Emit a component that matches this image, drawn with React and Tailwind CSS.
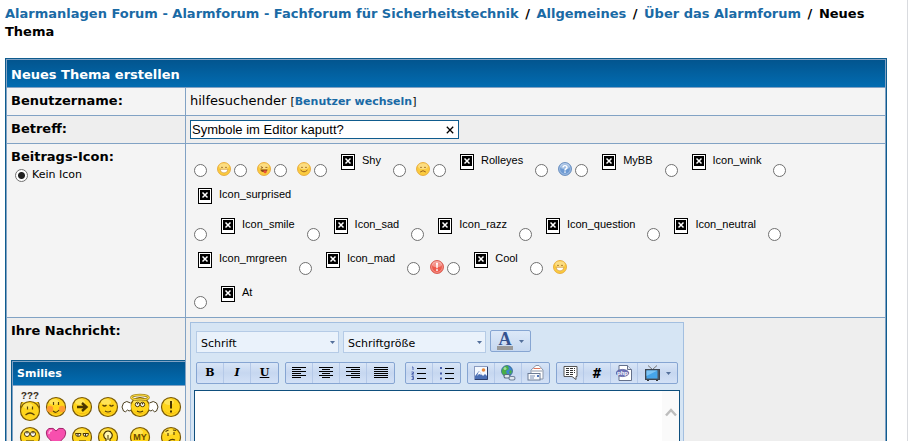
import React from 'react'

const postIconRows = [
  [
    { type: 'radio', id: 'grin' },
    { type: 'face', mood: 'grin' },
    { type: 'radio', id: 'tongue' },
    { type: 'face', mood: 'tongue' },
    { type: 'radio', id: 'smile' },
    { type: 'face', mood: 'smile' },
    { type: 'radio', id: 'shy' },
    { type: 'missing', text: 'Shy' },
    { type: 'radio', id: 'sad' },
    { type: 'face', mood: 'sad' },
    { type: 'radio', id: 'rolleyes' },
    { type: 'missing', text: 'Rolleyes' },
    { type: 'radio', id: 'question' },
    { type: 'face', mood: 'question' },
    { type: 'radio', id: 'mybb' },
    { type: 'missing', text: 'MyBB' },
    { type: 'radio', id: 'icon_wink' },
    { type: 'missing', text: 'Icon_wink' },
    { type: 'radio', id: 'icon_surprised' },
  ],
  [{ type: 'missing', text: 'Icon_surprised' }],
  [
    { type: 'radio', id: 'icon_smile' },
    { type: 'missing', text: 'Icon_smile' },
    { type: 'radio', id: 'icon_sad' },
    { type: 'missing', text: 'Icon_sad' },
    { type: 'radio', id: 'icon_razz' },
    { type: 'missing', text: 'Icon_razz' },
    { type: 'radio', id: 'icon_question' },
    { type: 'missing', text: 'Icon_question' },
    { type: 'radio', id: 'icon_neutral' },
    { type: 'missing', text: 'Icon_neutral' },
    { type: 'radio', id: 'icon_mrgreen' },
  ],
  [
    { type: 'missing', text: 'Icon_mrgreen' },
    { type: 'radio', id: 'icon_mad' },
    { type: 'missing', text: 'Icon_mad' },
    { type: 'radio', id: 'exclamation' },
    { type: 'face', mood: 'exclamation' },
    { type: 'radio', id: 'cool' },
    { type: 'missing', text: 'Cool' },
    { type: 'radio', id: 'biggrin' },
    { type: 'face', mood: 'grin' },
  ],
  [
    { type: 'radio', id: 'at' },
    { type: 'missing', text: 'At' },
  ],
]

const Radio = ({ id, label, defaultChecked }) => (
  <input
    type="radio"
    name="icon"
    id={`icon-${id}`}
    aria-label={label}
    defaultChecked={defaultChecked}
    className="block size-[13px] shrink-0 appearance-none rounded-full border border-[#707070] bg-white checked:bg-[radial-gradient(circle,#222_0,#222_3px,#fff_4px)]"
  />
)

const PostFace = ({ mood }) => {
  const special = mood === 'question' || mood === 'exclamation'
  const fill = mood === 'question' ? '#6d9ad3' : mood === 'exclamation' ? '#ee5a4c' : '#fbcb3f'
  const edge = mood === 'question' ? '#5d84b8' : mood === 'exclamation' ? '#d34b40' : '#e3a22c'
  return (
    <svg viewBox="0 0 14 14" className="size-3.5" aria-hidden="true">
      <circle cx="7" cy="7" r="6.5" fill={fill} stroke={edge} strokeWidth=".8" />
      <ellipse cx="7" cy="4.2" rx="4.8" ry="3" fill="#fff" opacity=".35" />
      {special && <circle cx="7" cy="7" r="5.4" fill="none" stroke="#fff" strokeWidth=".7" opacity=".5" />}
      {!special && mood !== 'tongue' && (
        <path d="M4.2 5.6q.8-1.2 1.6 0M8.2 5.6q.8-1.2 1.6 0" fill="none" stroke="#8f5a18" strokeWidth=".9" />
      )}
      {mood === 'grin' && <path d="M3 7.3h8q-.5 3.6-4 3.6t-4-3.6z" fill="#fff" stroke="#c98a2a" strokeWidth=".6" />}
      {mood === 'tongue' && (
        <>
          <path d="M3.8 4.6l2 1-2 .8M8.4 5.4h2" fill="none" stroke="#8f5a18" strokeWidth=".9" />
          <path d="M3.4 7.4h7.2q-.5 2.6-3.6 2.6t-3.6-2.6z" fill="#8a4a1a" />
          <path d="M6.6 8.4h3v2.2q-1.5 1.6-3 0z" fill="#e8503a" />
        </>
      )}
      {mood === 'smile' && <path d="M3.5 8q3.5 3.6 7 0" fill="none" stroke="#9a611c" strokeWidth="1" />}
      {mood === 'sad' && <path d="M4.2 10q2.8-2.6 5.6 0" fill="none" stroke="#9a611c" strokeWidth="1" />}
      {mood === 'question' && (
        <>
          <path d="M5 5.6q0-2 2-2t2 1.8q0 1-1.2 1.6-.8.4-.8 1.4" fill="none" stroke="#fff" strokeWidth="1.4" />
          <rect x="6.3" y="9.4" width="1.4" height="1.4" fill="#fff" />
        </>
      )}
      {mood === 'exclamation' && (
        <>
          <path d="M6 2.8h2l-.4 5.4H6.4z" fill="#fff" />
          <rect x="6.2" y="9.2" width="1.6" height="1.7" fill="#fff" />
        </>
      )}
    </svg>
  )
}

const MissingIcon = ({ text }) => (
  <span className="ml-1 mr-3 flex items-start gap-[7px] font-['Liberation_Sans',sans-serif] text-[11px] leading-3">
    <svg viewBox="0 0 14 16" className="h-4 w-3.5" aria-hidden="true">
      <rect x=".5" y=".5" width="13" height="15" fill="#fff" stroke="#000" />
      <rect x="2" y="2" width="10" height="10" fill="#000" />
      <path d="M4.5 4.5l5 5M9.5 4.5l-5 5" stroke="#fff" strokeWidth="1.5" />
    </svg>
    {text}
  </span>
)

const PostIcon = ({ item }) => {
  if (item.type === 'radio') {
    return (
      <span className="mr-2.5 pt-2.5">
        <Radio id={item.id} label={item.id} />
      </span>
    )
  }
  if (item.type === 'face') {
    return (
      <span className="mr-[3px] pt-2">
        <PostFace mood={item.mood} />
      </span>
    )
  }
  return <MissingIcon text={item.text} />
}

const Ball = ({ children, label }) => (
  <button type="button" aria-label={label} className="block shrink-0">
    <svg viewBox="0 0 22 22" className="size-[22px] overflow-visible">
      <circle cx="11" cy="11" r="9.5" fill="#ffd51c" stroke="#7a5a08" strokeWidth="1.2" />
      <path d="M4 14a8 8 0 0 0 14 0a9 9 0 0 1-14 0" fill="#f2b30c" />
      <ellipse cx="9" cy="6" rx="5" ry="3" fill="#ffea70" opacity=".7" />
      {children}
    </svg>
  </button>
)

const Smilies = () => (
  <div className="w-60 border border-[#0f5c8e] bg-[#81a2c4] p-px">
    <div className="bg-linear-to-b from-[#02558f] to-[#026cb1] px-1 py-1 text-[11px] leading-[15px] font-bold text-white">
      Smilies
    </div>
    <div className="mt-px grid grid-cols-[26px_26px_26px_26px_37px_26px] gap-y-2 bg-[#f4f4f4] pt-2.5 pb-2 pl-1 *:justify-self-center">
      <Ball label="confused">
        <rect x="0" y="-6" width="22" height="12" fill="#f4f4f4" />
        <circle cx="11" cy="15" r="9.5" fill="#ffd51c" stroke="#7a5a08" strokeWidth="1.2" />
        <ellipse cx="9" cy="10" rx="5" ry="3" fill="#ffea70" opacity=".7" />
        <path d="M8.5 10.500v3M13.5 10.500v3M6.5 19q4.5-4 9 0" fill="none" stroke="#5a4308" strokeWidth="1.2" />
        <text x="2" y="3" fontSize="10" fontWeight="bold" fontFamily="Liberation Mono" fill="#3a3020">???</text>
      </Ball>
      <Ball label="blush">
        <circle cx="5" cy="13" r="3.2" fill="#ff9c32" />
        <circle cx="17" cy="13" r="3.2" fill="#ff9c32" />
        <path d="M8.5 6v3M13.5 6v3M8 15q3 3 6-1" fill="none" stroke="#5a4308" strokeWidth="1.2" />
      </Ball>
      <Ball label="arrow">
        <path d="M6 11h9M11 7l4.500 4-4.500 4" fill="none" stroke="#4a3600" strokeWidth="2.4" />
      </Ball>
      <Ball label="sleepy">
        <path d="M5.5 9q2 2 4 0M12.5 9q2 2 4 0M8 15q3 2 6 0" fill="none" stroke="#5a4308" strokeWidth="1.2" />
      </Ball>
      <Ball label="angel">
        <path d="M1.5 7q-4-3-7 0q-3 4 0 8q2 2 4-1q1.500 2 3.500 0M20.500 7q4-3 7 0q3 4 0 8q-2 2-4-1q-1.500 2-3.500 0" fill="#fff" stroke="#4b4020" />
        <ellipse cx="11" cy="1.5" rx="8.500" ry="2.500" fill="none" stroke="#a98a20" strokeWidth="2.600" />
        <ellipse cx="11" cy="1.5" rx="8.500" ry="2.500" fill="none" stroke="#ffdf45" strokeWidth="1.200" />
        <circle cx="8.500" cy="8.500" r="2.200" fill="#fff" stroke="#4a3600" />
        <circle cx="13.500" cy="8.500" r="2.200" fill="#fff" stroke="#4a3600" />
        <path d="M8.500 7v1.500M13.500 7v1.500M8 15q3 2 6 0" fill="none" stroke="#4a3600" strokeWidth="1.200" />
      </Ball>
      <Ball label="exclamation">
        <path d="M11 5v7.500M11 14.500v2" stroke="#4a3600" strokeWidth="2" />
      </Ball>
      <Ball label="rolleyes">
        <circle cx="8" cy="8" r="2.500" fill="#fff" stroke="#4a3600" />
        <circle cx="14" cy="8" r="2.500" fill="#fff" stroke="#4a3600" />
        <path d="M8 6v1.500M14 6v1.500M7 15h8" stroke="#4a3600" strokeWidth="1.200" />
      </Ball>
      <button type="button" aria-label="heart" className="block">
        <svg viewBox="0 0 22 22" className="size-[22px]">
          <path d="M11 20L2.500 11Q-.5 5 4 2.500Q8.500 1 11 5Q13.500 1 18 2.500Q22.500 5 19.500 11Z" fill="#f74fae" stroke="#a3266c" />
          <path d="M4 8q0-3.500 3-3.500" fill="none" stroke="#ffb0dd" strokeWidth="1.500" />
        </svg>
      </button>
      <Ball label="dodgy">
        <path d="M4.500 7.500h5.500q0 3-2.700 3t-2.800-3zM12 7.500h5.500q0 3-2.700 3t-2.800-3z" fill="#fff" stroke="#4a3600" />
        <path d="M7 8v2M14.500 8v2M8 15h7" stroke="#4a3600" strokeWidth="1.200" />
      </Ball>
      <Ball label="idea">
        <path d="M9 13q-3-2-2-5q1.200-3 4-3t4 3q1 3-2 5v4H9z" fill="#fff8b0" stroke="#4a3600" strokeWidth="1.200" />
        <path d="M11 9v5" stroke="#4a3600" />
      </Ball>
      <Ball label="mybb">
        <text x="11" y="14" textAnchor="middle" fontSize="9" fontWeight="bold" fontFamily="Liberation Sans" fill="#6a4b00">MY</text>
      </Ball>
      <Ball label="undecided">
        <path d="M8 7v3M14 6v3M5.500 5.500l3-1.500M13 4l3 .5M8 16q3-4 7-2" fill="none" stroke="#5a4308" strokeWidth="1.200" />
      </Ball>
    </div>
  </div>
)

const Caret = () => (
  <svg viewBox="0 0 5 3" className="h-[3px] w-[5px] shrink-0" aria-hidden="true">
    <path d="M0 0h5L2.500 3z" fill="#54709b" />
  </svg>
)

const ToolSelect = ({ label }) => (
  <div className="relative w-[143px]">
    <select
      aria-label={label}
      className="block h-[22px] w-full appearance-none border border-[#b5cbe6] bg-[#eaf2fb] px-1 pt-[3px] text-[11px] leading-4 text-black"
    >
      <option>{label}</option>
    </select>
    <span className="pointer-events-none absolute top-2.5 right-1 flex">
      <Caret />
    </span>
  </div>
)

const ToolGroup = ({ children }) => (
  <div className="flex h-[22px] divide-x divide-[#b5c9e8] rounded-xs border border-[#86a5d2] bg-linear-to-b from-[#d9e6f7] via-[#c6d7f0] to-[#d3e1f6]">
    {children}
  </div>
)

const Tool = ({ label, wide, children }) => (
  <button
    type="button"
    aria-label={label}
    className={`flex items-center justify-center gap-1.5 ${wide ? 'w-[39px]' : 'w-[27px]'}`}
  >
    {children}
  </button>
)

const Lines = ({ d }) => (
  <svg viewBox="0 0 16 14" className="h-3.5 w-4">
    <path d={d} stroke="#000" fill="none" shapeRendering="crispEdges" />
  </svg>
)

const ListIcon = ({ ordered }) => (
  <svg viewBox="0 0 16 14" className="h-3.5 w-4">
    <path d="M6 2.500h9M6 7.500h9M6 12.500h9" stroke="#000" shapeRendering="crispEdges" />
    {ordered ? (
      <path d="M1 1h1v3M.5 6h2v1.500h-1.500v1.500h2M.5 10.500h2v3h-2M1 12h1" fill="none" stroke="#4359a8" strokeWidth=".9" />
    ) : (
      <path d="M1 2h2M1 7.500h2M1 12.500h2" stroke="#4359a8" strokeWidth="2" />
    )}
  </svg>
)

const Editor = () => (
  <div className="w-full max-w-[494px] border border-[#a3bfe0] bg-[#d6e5f4] px-[3px] pt-[7px]">
    <div className="flex gap-1 px-0.5">
      <div className="flex items-center gap-1 pt-px">
        <ToolSelect label="Schrift" />
        <ToolSelect label="Schriftgröße" />
      </div>
      <button
        type="button"
        aria-label="Schriftfarbe"
        className="flex h-[22px] w-[41px] items-center justify-center gap-1.5 rounded-xs border border-[#86a5d2] bg-linear-to-b from-[#dce8f8] to-[#c6d8f0]"
      >
        <span className="w-4 border-b-4 border-[#999] text-center font-['Liberation_Serif',serif] text-lg leading-[13px] font-bold text-[#35538f]">
          A
        </span>
        <Caret />
      </button>
    </div>

    <div className="mt-[9px] mb-1.5 flex gap-2.5 px-0.5">
      <div className="flex gap-1.5 font-['DejaVu_Serif',serif] text-[11px] leading-4">
        <ToolGroup>
          <Tool label="Fett"><b>B</b></Tool>
          <Tool label="Kursiv"><b className="italic">I</b></Tool>
          <Tool label="Unterstrichen"><b className="underline">U</b></Tool>
        </ToolGroup>
        <ToolGroup>
          <Tool label="Linksbündig"><Lines d="M1 1.500h14M1 3.500h9M1 5.500h14M1 7.500h9M1 9.500h14M1 11.500h9" /></Tool>
          <Tool label="Zentriert"><Lines d="M1 1.500h14M4 3.500h8M1 5.500h14M4 7.500h8M1 9.500h14M4 11.500h8" /></Tool>
          <Tool label="Rechtsbündig"><Lines d="M1 1.500h14M6 3.500h9M1 5.500h14M6 7.500h9M1 9.500h14M6 11.500h9" /></Tool>
          <Tool label="Blocksatz"><Lines d="M1 1.500h14M1 3.500h14M1 5.500h14M1 7.500h14M1 9.500h14M1 11.500h14" /></Tool>
        </ToolGroup>
      </div>

      <div className="flex gap-1.5">
        <ToolGroup>
          <Tool label="Nummerierte Liste"><ListIcon ordered /></Tool>
          <Tool label="Liste"><ListIcon /></Tool>
        </ToolGroup>
        <ToolGroup>
          <Tool label="Bild">
            <svg viewBox="0 0 14 14" className="size-3.5">
              <rect x=".5" y=".5" width="13" height="13" fill="#f5f9ff" stroke="#8a9bc0" />
              <path d="M1 13V10l4-5 4 5 2-2 2 2v3z" fill="#4b6fb5" />
              <path d="M5 5l3 4-3-1-2 2z" fill="#fff" />
              <circle cx="9.500" cy="4" r="1.800" fill="#e98a3c" />
              <path d="M13.500 1v12.500H1" fill="none" stroke="#2b3d6b" />
            </svg>
          </Tool>
          <Tool label="Link">
            <svg viewBox="0 0 16 16" className="size-4">
              <circle cx="7" cy="6" r="5.500" fill="#3f86cf" stroke="#2c5d80" strokeWidth=".7" />
              <path d="M3 3q3-3 5-2l1 3-3 2 1 3-2 2Q1 9 2 5zM10 5l2 1-1 3-2-1z" fill="#49ad46" />
              <circle cx="5" cy="3.500" r="1.500" fill="#c8eec0" opacity=".7" />
              <rect x="4" y="9.500" width="6" height="3.500" rx="1.700" fill="#dfe6ee" stroke="#5a6a80" strokeWidth="1.100" />
              <rect x="9" y="11.500" width="6" height="3.500" rx="1.700" fill="#dfe6ee" stroke="#73849b" strokeWidth="1.100" />
            </svg>
          </Tool>
          <Tool label="E-Mail">
            <svg viewBox="0 0 17 16" className="h-4 w-[17px]">
              <path d="M4 5l5-4.500h3L16 5v9H4z" fill="#fff" stroke="#8b96a8" />
              <path d="M6.500 3.500h7" stroke="#e0765c" />
              <path d="M4.500 6h11" fill="none" stroke="#8b96a8" />
              <rect x="1" y="8.500" width="12" height="6.500" fill="#f7f9fc" stroke="#6c7c96" />
              <path d="M3 11h5M3 13h4" stroke="#7f92b5" />
              <rect x="10" y="10" width="2" height="2" fill="#5276b8" />
            </svg>
          </Tool>
        </ToolGroup>
        <ToolGroup>
          <Tool label="Zitat">
            <svg viewBox="0 0 15 14" className="h-3.5 w-[15px]">
              <path d="M1 .5h13v10h-1v3l-4-3H1z" fill="#fff" stroke="#555" />
              <path d="M3 2.500h9M3 4.500h9M3 6.500h9M3 8.500h7" stroke="#333" strokeDasharray="3 1" shapeRendering="crispEdges" />
            </svg>
          </Tool>
          <Tool label="Code">
            <b className="font-['DejaVu_Sans_Mono',monospace] text-sm leading-4">#</b>
          </Tool>
          <Tool label="PHP-Code">
            <svg viewBox="0 0 16 16" className="size-4">
              <path d="M3 .5h8.500l4 4v11H3z" fill="#fff" stroke="#64708a" />
              <path d="M11.500.5v4h4" fill="#dfe6f2" stroke="#64708a" />
              <ellipse cx="6.500" cy="8" rx="6.300" ry="3.600" fill="#6d72b8" stroke="#41468c" strokeWidth=".6" />
              <text x="6.500" y="9.800" textAnchor="middle" fontSize="6" fontWeight="bold" fontFamily="Liberation Sans" fill="#fff">php</text>
            </svg>
          </Tool>
          <Tool label="Video" wide>
            <svg viewBox="0 0 15 16" className="h-4 w-[15px]">
              <path d="M3 .5l4.500 4 4.500-4" fill="none" stroke="#777" />
              <rect x=".5" y="4.500" width="14" height="10" fill="#4d5866" stroke="#3d4652" />
              <rect x="1.500" y="5.500" width="11" height="8" fill="#46a5ea" />
              <path d="M1.500 5.500h11L1.500 11z" fill="#7cc4f5" />
              <path d="M2 15.500h2M11 15.500h2" stroke="#333" />
            </svg>
            <Caret />
          </Tool>
        </ToolGroup>
      </div>
    </div>

    <div className="relative">
      <textarea
        aria-label="Ihre Nachricht"
        className="block h-60 w-full resize-none border border-[#0f4f7d] bg-white p-1 text-[13px] outline-none"
      />
      <div className="pointer-events-none absolute inset-y-px right-px flex w-[17px] justify-center bg-[#fafafa] pt-[17px]">
        <svg viewBox="0 0 12 9" className="h-[9px] w-3" aria-hidden="true">
          <path d="M1 7.500l5-5.500 5 5.500" fill="none" stroke="#bdbdbd" strokeWidth="2.500" />
        </svg>
      </div>
    </div>
  </div>
)

const crumbs = ['Alarmanlagen Forum - Alarmforum - Fachforum für Sicherheitstechnik', 'Allgemeines', 'Über das Alarmforum']

const App = () => (
  <div className="h-screen overflow-hidden border-r border-[#d9dbdf] bg-white pt-[5px] pr-5 pl-[5px] font-[Verdana,'DejaVu_Sans',sans-serif] text-[13px] leading-[18px] text-black">
    <nav className="mb-[17px] font-bold">
      {crumbs.map((crumb) => (
        <React.Fragment key={crumb}>
          <a href="#" className="text-[#1a6aa5]">{crumb}</a>
          <span className="mx-0.5"> / </span>
        </React.Fragment>
      ))}
      Neues Thema
    </nav>

    <form className="border border-[#0f5c8e] bg-[#81a2c4] p-px">
      <h1 className="mb-px bg-linear-to-b from-[#02558f] to-[#026cb1] px-1 pt-1.5 pb-[3px] font-bold text-white">
        Neues Thema erstellen
      </h1>
      <div className="grid grid-cols-[178px_minmax(0,1fr)] gap-px">
        <div className="bg-[#f4f4f4] p-1 font-bold">Benutzername:</div>
        <div className="bg-[#f4f4f4] p-1">
          hilfesuchender{' '}
          <span className="text-[11px]">
            [<a href="#" className="font-bold text-[#1a6aa5]">Benutzer wechseln</a>]
          </span>
        </div>

        <label htmlFor="subject" className="bg-[#eeeeee] p-1 font-bold">Betreff:</label>
        <div className="bg-[#eeeeee] p-1">
          <div className="flex w-[269px] items-center border border-[#0f5c8e] bg-white pr-1 font-['Liberation_Sans',sans-serif]">
            <input
              id="subject"
              type="text"
              defaultValue="Symbole im Editor kaputt?"
              className="h-[17px] min-w-0 flex-1 px-px text-[13px] outline-none"
            />
            <button type="button" aria-label="Löschen">
              <svg viewBox="0 0 8 8" className="size-2">
                <path d="M.8.8l6.400 6.400M7.200.8L.8 7.200" stroke="#000" strokeWidth="1.300" />
              </svg>
            </button>
          </div>
        </div>

        <div className="bg-[#f4f4f4] p-1">
          <div className="font-bold">Beitrags-Icon:</div>
          <div className="flex items-center gap-1 pl-1 text-[11px]">
            <Radio id="none" defaultChecked />
            <label htmlFor="icon-none">Kein Icon</label>
          </div>
        </div>
        <div className="flex flex-col gap-[11px] bg-[#f4f4f4] pt-2.5 pb-2 pl-2">
          {postIconRows.map((row, i) => (
            <div key={i} className="flex min-h-[19px] items-start">
              {row.map((item, j) => (
                <PostIcon key={j} item={item} />
              ))}
            </div>
          ))}
        </div>

        <div className="overflow-hidden bg-[#eeeeee] py-1 pl-1">
          <div className="mb-5 font-bold">Ihre Nachricht:</div>
          <Smilies />
        </div>
        <div className="bg-[#eeeeee] p-1">
          <Editor />
        </div>
      </div>
    </form>
  </div>
)

export default App
